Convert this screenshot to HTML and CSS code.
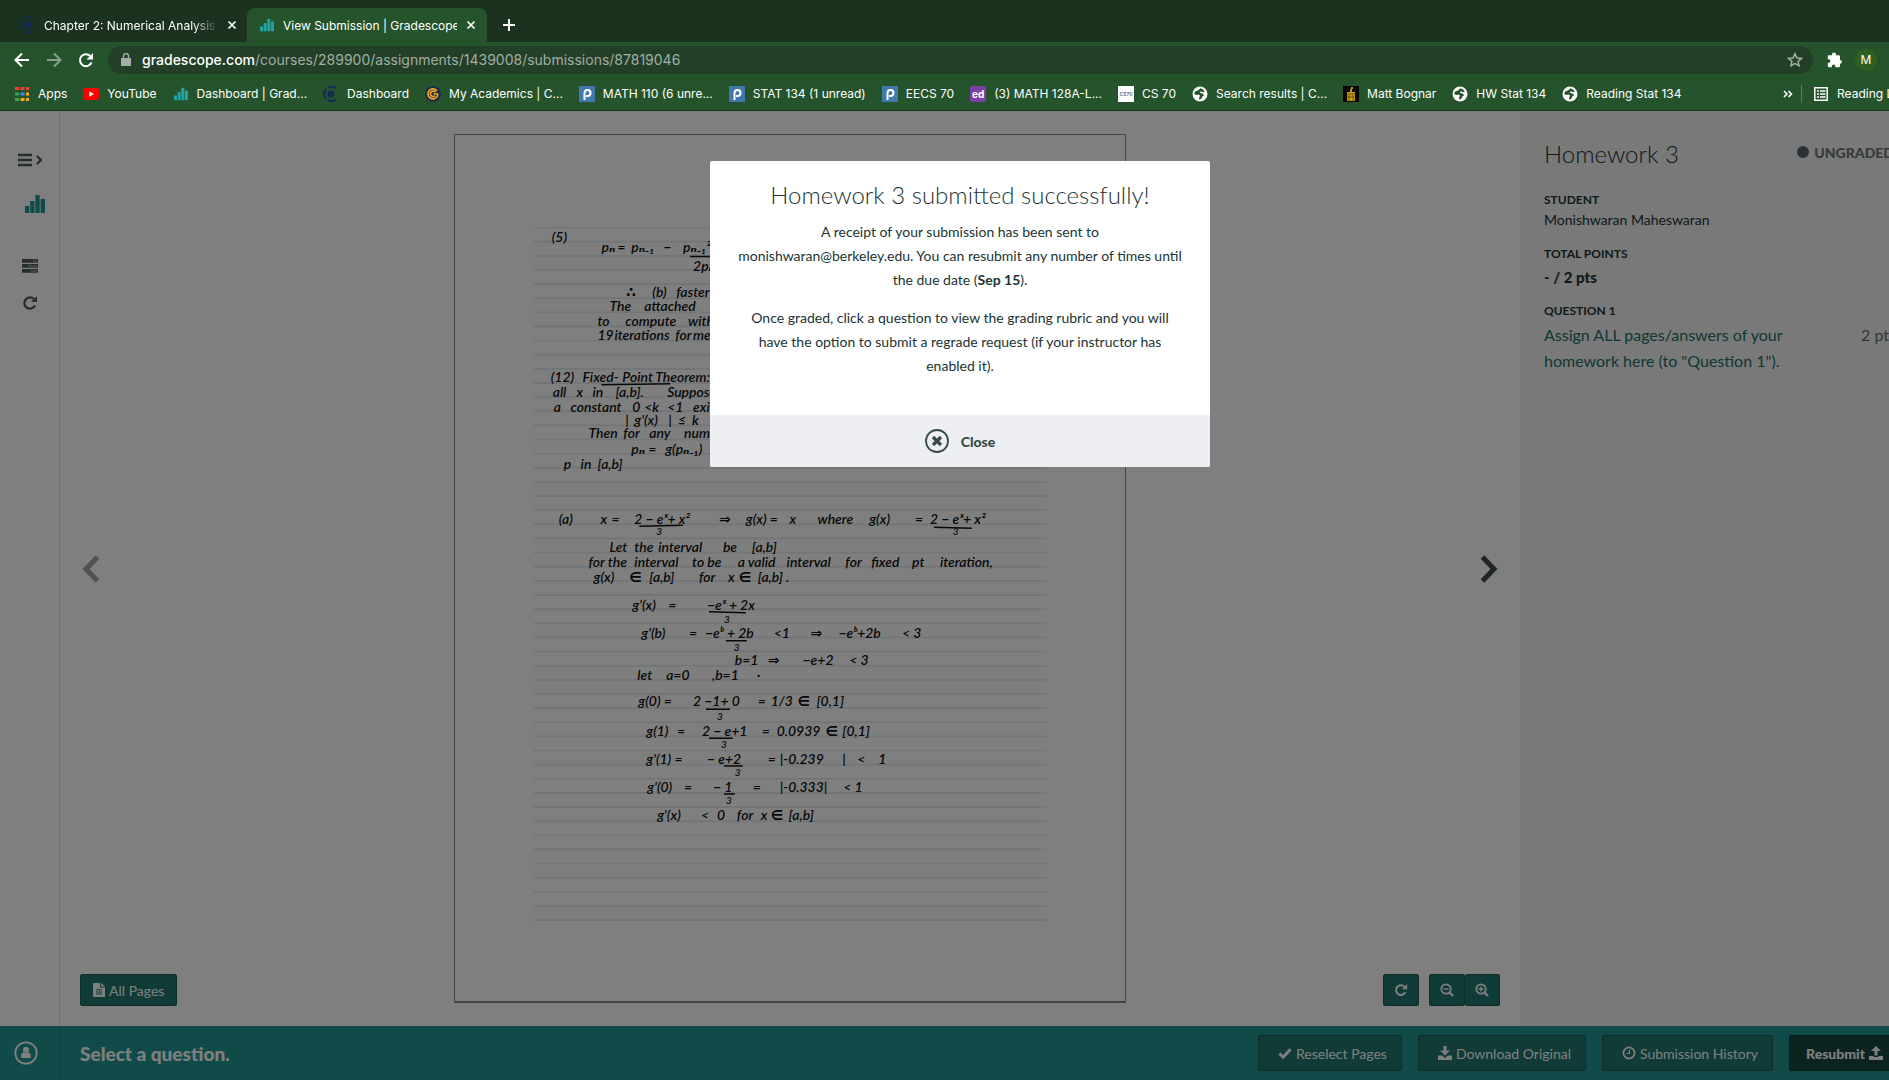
FILE: index.html
```html
<!DOCTYPE html>
<html lang="en">
<head>
<meta charset="utf-8">
<title>View Submission | Gradescope</title>
<link rel="stylesheet" href="styles.css">
</head>
<body>
<svg class="defs" aria-hidden="true">
  <symbol id="bars" viewBox="0 0 20 18"><path d="M0 11h4.3v7H0zM5.2 6h4.3v12H5.2zM10.4 0h4.3v18h-4.3zM15.6 4H20v14h-4.4z"/></symbol>
  <symbol id="cal" viewBox="0 0 16 16"><circle cx="8" cy="8" r="3.4"/><path d="M12.5 2.2A7 7 0 0 0 5 1.800M3.300 3A7 7 0 0 0 3.300 13M5 14.200a7 7 0 0 0 7.500-.4" fill="none" stroke="currentColor" stroke-width="2"/></symbol>
  <symbol id="close" viewBox="0 0 10 10"><path d="M1.500 1.500l7 7M8.500 1.500l-7 7" fill="none" stroke="currentColor" stroke-width="1.700"/></symbol>
  <symbol id="globe" viewBox="0 0 16 16"><circle cx="8" cy="8" r="7.500"/><path d="M8.500 2.200 6 4.500 3 5.500 2.200 8l2.300 1 2-.5 1.500 1L7 12l.5 1.800 2-1.300.8-2 1.700-1-1-1.800L8.500 7l-1-.8 2-1 1.500 1 1.800-.2A6 6 0 0 0 8.500 2.200z" fill="#25532b"/></symbol>
  <symbol id="piazza" viewBox="0 0 16 16"><path fill="#4179ad" d="M0 0h16v16H0z"/><path d="M5.500 14V6.800a3 3 0 1 1 3 3.200H7" fill="none" stroke="#fff" stroke-width="2"/></symbol>
  <symbol id="redo" viewBox="0 0 16 16"><path d="M13 10.500A5.600 5.600 0 1 1 12 4.200" fill="none" stroke="currentColor" stroke-width="2.300"/><path d="M15 1v6H9z"/></symbol>
</svg>
<div class="window">
  <header class="chrome">
    <div class="tabs">
      <div class="tab"><svg class="i16 navy"><use href="#cal"/></svg><span class="fade">Chapter 2: Numerical Analysis</span><button class="x" aria-label="Close tab"><svg><use href="#close"/></svg></button></div>
      <div class="tab active"><svg class="i14 teal"><use href="#bars"/></svg><span>View Submission | Gradescope</span><button class="x" aria-label="Close tab"><svg><use href="#close"/></svg></button></div>
      <button class="new" aria-label="New tab"><svg viewBox="0 0 12 12"><path d="M6 0v12M0 6h12" stroke="currentColor" stroke-width="2"/></svg></button>
    </div>
    <div class="toolbar">
      <button aria-label="Back"><svg viewBox="0 0 16 16"><path d="M15 8H2M8 1.500 1.500 8 8 14.500" fill="none" stroke="currentColor" stroke-width="2"/></svg></button>
      <button class="dim" aria-label="Forward"><svg viewBox="0 0 16 16"><path d="M1 8h13M8 1.500 14.500 8 8 14.500" fill="none" stroke="currentColor" stroke-width="2"/></svg></button>
      <button aria-label="Reload"><svg viewBox="0 0 16 16"><path d="M13.500 10.500A6 6 0 1 1 12.300 4" fill="none" stroke="currentColor" stroke-width="2"/><path d="M15 1v6.500H8.500z"/></svg></button>
      <div class="omnibox">
        <svg class="lock" viewBox="0 0 10 13"><path d="M0 5h10v8H0z"/><path d="M2.500 5V3a2.500 2.500 0 0 1 5 0v2" fill="none" stroke="currentColor" stroke-width="1.400"/></svg>
        <a class="url" href="#"><b>gradescope.com</b>/courses/289900/assignments/1439008/submissions/87819046</a>
        <svg class="i16 star" viewBox="0 0 16 16"><path d="m8 1.800 1.900 4.200 4.600.4-3.500 3 1.100 4.500L8 11.500l-4.100 2.400L5 9.400l-3.500-3 4.600-.4z" fill="none" stroke="currentColor" stroke-width="1.400"/></svg>
      </div>
      <svg class="i16" viewBox="0 0 16 16"><path d="M13.500 8H13V4.500a1.300 1.300 0 0 0-1.300-1.300H9V2.600a2 2 0 0 0-4 0v.6H2A1.300 1.300 0 0 0 .8 4.500v2.800h.8a1.700 1.700 0 0 1 0 3.600H.8V14A1.300 1.300 0 0 0 2 15.200h2.800v-.8a1.700 1.700 0 0 1 3.600 0v.8h3.300A1.300 1.300 0 0 0 13 14v-2.300h.5a1.900 1.900 0 0 0 0-3.700z"/></svg>
      <span class="avatar">M</span>
    </div>
    <nav class="bookmarks">
      <a href="#"><svg class="i16" viewBox="0 0 16 16"><path fill="#ea4335" d="M1 1h4v3H1zM6.500 1h4v3h-4zM12 1h3v3h-3z"/><path fill="#34a853" d="M1 6.500h4v3H1zM1 12h4v3H1z"/><path fill="#4285f4" d="M6.500 6.500h4v3h-4z"/><path fill="#fbab17" d="M12 6.500h3v3h-3zM6.500 12h4v3h-4zM12 12h3v3h-3z"/></svg>Apps</a>
      <a href="#"><svg class="i16" viewBox="0 0 16 16"><rect y="2" width="16" height="12" rx="3" fill="#f00"/><path d="M6.300 5.300 11 8l-4.700 2.700z"/></svg>YouTube</a>
      <a href="#"><svg class="i16 teal thin"><use href="#bars"/></svg>Dashboard | Grad...</a>
      <a href="#"><svg class="i16 navy"><use href="#cal"/></svg>Dashboard</a>
      <a href="#"><svg class="i16" viewBox="0 0 16 16"><circle cx="8" cy="8" r="8" fill="#1c2c4c"/><path d="M12 5a5 5 0 1 0 .5 5V8H8.500M10.500 6.200A2.800 2.800 0 1 0 10 10" fill="none" stroke="#f0a32b" stroke-width="1.700"/></svg>My Academics | C...</a>
      <a href="#"><svg class="i16"><use href="#piazza"/></svg>MATH 110 (6 unre...</a>
      <a href="#"><svg class="i16"><use href="#piazza"/></svg>STAT 134 (1 unread)</a>
      <a href="#"><svg class="i16"><use href="#piazza"/></svg>EECS 70</a>
      <a href="#"><span class="ed">ed</span>(3) MATH 128A-L...</a>
      <a href="#"><span class="cs">CS70</span>CS 70</a>
      <a href="#"><svg class="i16"><use href="#globe"/></svg>Search results | C...</a>
      <a href="#"><svg class="i16" viewBox="0 0 16 16"><path fill="#050505" d="M0 0h16v16H0z"/><path fill="#c99a13" d="M4 6h8v9H4zM7 3h2v3H7zM8 1h2v2H8z"/><path stroke="#443000" stroke-width=".6" d="M4 8h8M4 11h8M6 9v6M10 9v6"/></svg>Matt Bognar</a>
      <a href="#"><svg class="i16"><use href="#globe"/></svg>HW Stat 134</a>
      <a href="#"><svg class="i16"><use href="#globe"/></svg>Reading Stat 134</a>
      <button class="more" aria-label="More bookmarks"><svg viewBox="0 0 10 8"><path d="m1 1 3 3-3 3M5.500 1l3 3-3 3" fill="none" stroke="currentColor" stroke-width="1.600"/></svg></button>
      <a class="reading" href="#"><svg class="i16" viewBox="0 0 16 16"><path d="M1.800 1.800h12.400v12.400H1.800zM4 5h2M7 5h5.500M4 8h2M7 8h5.500M4 11h2M7 11h5.500" fill="none" stroke="currentColor" stroke-width="1.500"/></svg>Reading List</a>
    </nav>
  </header>
  <div class="app">
    <div class="content">
      <nav class="side">
        <button class="wide" aria-label="Open menu"><svg viewBox="0 0 25 14"><path d="M0 2h14M0 7h14M0 12h14M19 3l4 4-4 4" fill="none" stroke="currentColor" stroke-width="2.300"/></svg></button>
        <a class="logo" href="#" aria-label="Gradescope"><svg><use href="#bars"/></svg></a>
        <a class="tasks" href="#" aria-label="Assignments"><svg viewBox="0 0 16 14"><path d="M0 0h16v3.800H0zM0 5h16v3.800H0zM0 10h16v3.800H0z"/><path d="M11 2h4M6 7h9M9 12h6" stroke="#bbb" stroke-width="1.200"/></svg></a>
        <a href="#" aria-label="Regrade requests"><svg><use href="#redo"/></svg></a>
      </nav>
      <main class="viewer">
        <button class="arrow prev" aria-label="Previous page"><svg viewBox="0 0 18 28"><path d="M15.500 2 4 14l11.500 12" fill="none" stroke="currentColor" stroke-width="5"/></svg></button>
        <svg class="paper" viewBox="454 134 672 870" role="img" aria-label="Page of handwritten homework">
          <defs><pattern id="rule" x="533" y="226" width="515" height="14.200" patternUnits="userSpaceOnUse"><path d="M0 1h515" stroke="#dfe3e6" stroke-width="1.400"/></pattern></defs>
          <rect x="533" y="226" width="515" height="699" fill="url(#rule)"/>
          <g class="ink">
            <text y="241"><tspan x="551">(5)</tspan></text>
            <text y="252"><tspan x="601">pₙ</tspan><tspan x="617">=</tspan><tspan x="631">pₙ₋₁</tspan><tspan x="663">−</tspan><tspan x="683">pₙ₋₁²</tspan></text>
            <text y="271"><tspan x="693">2pₙ</tspan></text>
            <text y="297"><tspan x="626">∴</tspan><tspan x="652">(b)</tspan><tspan x="676">faster</tspan></text>
            <text y="311"><tspan x="609">The</tspan><tspan x="644">attached</tspan></text>
            <text y="326"><tspan x="597">to</tspan><tspan x="625">compute</tspan><tspan x="688">with</tspan></text>
            <text y="340"><tspan x="597">19</tspan><tspan x="614">iterations</tspan><tspan x="675">for</tspan><tspan x="693">me</tspan></text>
            <text y="382"><tspan x="550">(12)</tspan><tspan x="582">Fixed-</tspan><tspan x="622">Point</tspan><tspan x="655">Theorem:</tspan></text>
            <text y="397"><tspan x="552">all</tspan><tspan x="576">x</tspan><tspan x="592">in</tspan><tspan x="615">[a,b].</tspan><tspan x="667">Suppose,</tspan></text>
            <text y="412"><tspan x="553">a</tspan><tspan x="570">constant</tspan><tspan x="632">0</tspan><tspan x="644">&lt;k</tspan><tspan x="667">&lt;1</tspan><tspan x="693">exi</tspan></text>
            <text y="425"><tspan x="625">|</tspan><tspan x="634">g'(x)</tspan><tspan x="668">|</tspan><tspan x="678">≤</tspan><tspan x="692">k</tspan></text>
            <text y="438"><tspan x="588">Then</tspan><tspan x="623">for</tspan><tspan x="649">any</tspan><tspan x="684">num</tspan></text>
            <text y="454"><tspan x="631">pₙ</tspan><tspan x="648">=</tspan><tspan x="665">g(pₙ₋₁)</tspan></text>
            <text y="470"><tspan x="563">p</tspan><tspan x="580">in</tspan><tspan x="597">[a,b]</tspan></text>
            <text y="525"><tspan x="558">(a)</tspan><tspan x="600">x</tspan><tspan x="611">=</tspan><tspan x="634">2 − eˣ+ x²</tspan><tspan x="719">⇒</tspan><tspan x="746">g(x) =</tspan><tspan x="790">x</tspan><tspan x="818">where</tspan><tspan x="870">g(x)</tspan><tspan x="916">=</tspan><tspan x="931">2 − eˣ+ x²</tspan></text>
            <text class="den" y="536"><tspan x="656">3</tspan><tspan x="954">3</tspan></text>
            <text y="553"><tspan x="609">Let</tspan><tspan x="634">the</tspan><tspan x="658">interval</tspan><tspan x="723">be</tspan><tspan x="752">[a,b]</tspan></text>
            <text y="568"><tspan x="588">for the</tspan><tspan x="634">interval</tspan><tspan x="692">to be</tspan><tspan x="738">a valid</tspan><tspan x="787">interval</tspan><tspan x="846">for</tspan><tspan x="872">fixed</tspan><tspan x="913">pt</tspan><tspan x="941">iteration,</tspan></text>
            <text y="583"><tspan x="593">g(x)</tspan><tspan x="629">∈</tspan><tspan x="649">[a,b]</tspan><tspan x="699">for</tspan><tspan x="728">x</tspan><tspan x="739">∈</tspan><tspan x="758">[a,b] .</tspan></text>
            <text y="611"><tspan x="632">g'(x)</tspan><tspan x="668">=</tspan><tspan x="707">−eˣ + 2x</tspan></text>
            <text class="den" y="624"><tspan x="724">3</tspan></text>
            <text y="639"><tspan x="641">g'(b)</tspan><tspan x="689">=</tspan><tspan x="705">−eᵇ + 2b</tspan><tspan x="774">&lt;1</tspan><tspan x="811">⇒</tspan><tspan x="839">−eᵇ+2b</tspan><tspan x="903">&lt; 3</tspan></text>
            <text class="den" y="652"><tspan x="734">3</tspan></text>
            <text y="666"><tspan x="735">b=1</tspan><tspan x="768">⇒</tspan><tspan x="803">−e+2</tspan><tspan x="850">&lt; 3</tspan></text>
            <text y="682"><tspan x="637">let</tspan><tspan x="666">a=0</tspan><tspan x="712">,b=1</tspan><tspan x="757">·</tspan></text>
            <text y="708"><tspan x="638">g(0) =</tspan><tspan x="693">2 −1+ 0</tspan><tspan x="758">=</tspan><tspan x="771">1/3</tspan><tspan x="798">∈</tspan><tspan x="817">[0,1]</tspan></text>
            <text class="den" y="722"><tspan x="717">3</tspan></text>
            <text y="738"><tspan x="646">g(1)</tspan><tspan x="677">=</tspan><tspan x="702">2 − e+1</tspan><tspan x="762">=</tspan><tspan x="777">0.0939</tspan><tspan x="826">∈</tspan><tspan x="843">[0,1]</tspan></text>
            <text class="den" y="750"><tspan x="721">3</tspan></text>
            <text y="766"><tspan x="646">g'(1) =</tspan><tspan x="707">− e+2</tspan><tspan x="768">=</tspan><tspan x="780">|-0.239</tspan><tspan x="843">|</tspan><tspan x="858">&lt;</tspan><tspan x="879">1</tspan></text>
            <text class="den" y="778"><tspan x="735">3</tspan></text>
            <text y="794"><tspan x="647">g'(0)</tspan><tspan x="684">=</tspan><tspan x="713">− 1</tspan><tspan x="753">=</tspan><tspan x="780">|-0.333|</tspan><tspan x="844">&lt; 1</tspan></text>
            <text class="den" y="806"><tspan x="726">3</tspan></text>
            <text y="822"><tspan x="657">g'(x)</tspan><tspan x="701">&lt;</tspan><tspan x="717">0</tspan><tspan x="737">for</tspan><tspan x="761">x</tspan><tspan x="771">∈</tspan><tspan x="789">[a,b]</tspan></text>
            <path d="M690 256h22M601 385l69-1M639 527l44-1M935 528l38 1M709 613l37 1M726 642h21M706 711h24M709 740h24M724 768h19M724 796h11"/>
          </g>
        </svg>
        <button class="arrow next" aria-label="Next page"><svg viewBox="0 0 18 28"><path d="M2.500 2 14 14 2.500 26" fill="none" stroke="currentColor" stroke-width="5"/></svg></button>
        <div class="controls">
          <button class="btn"><svg class="file" viewBox="0 0 12 14"><path fill-rule="evenodd" d="M0 0h7v4.500h5V14H0zM8 0l4 3.500H8zM3 6.200h6v1H3zM3 8.400h6v1H3zM3 10.600h6v1H3z"/></svg>All Pages</button>
          <button class="btn sq right" aria-label="Rotate"><svg class="i14"><use href="#redo"/></svg></button>
          <div class="group">
            <button class="btn sq" aria-label="Zoom out"><svg class="i14" viewBox="0 0 14 14"><path d="M9.500 9.500 13 13" stroke="currentColor" stroke-width="2.400"/><path d="M3.500 6h5" stroke="currentColor" stroke-width="1.400"/><circle cx="6" cy="6" r="4.700" fill="none" stroke="currentColor" stroke-width="1.800"/></svg></button>
            <button class="btn sq" aria-label="Zoom in"><svg class="i14" viewBox="0 0 14 14"><path d="M9.500 9.500 13 13" stroke="currentColor" stroke-width="2.400"/><path d="M3.500 6h5M6 3.500v5" stroke="currentColor" stroke-width="1.400"/><circle cx="6" cy="6" r="4.700" fill="none" stroke="currentColor" stroke-width="1.800"/></svg></button>
          </div>
        </div>
      </main>
      <aside class="panel">
        <div class="head"><h1>Homework 3</h1><span class="status"><i></i>UNGRADED</span></div>
        <h2>STUDENT</h2>
        <p class="name">Monishwaran Maheswaran</p>
        <h2>TOTAL POINTS</h2>
        <p class="points">- / 2 pts</p>
        <h2>QUESTION 1</h2>
        <div class="question"><a href="#">Assign ALL pages/answers of your homework here (to "Question 1").</a><span>2 pts</span></div>
      </aside>
    </div>
    <footer class="actions">
      <a class="user" href="#" aria-label="Account"><svg viewBox="0 0 24 24"><circle cx="12" cy="12" r="10.700" fill="none" stroke="currentColor" stroke-width="1.800"/><circle cx="12" cy="8.800" r="3"/><path d="M7.200 17v-2.500c0-2 1.200-3.300 2.500-3.300 1.200 1 3.400 1 4.600 0 1.300 0 2.500 1.300 2.500 3.300V17z"/></svg></a>
      <strong>Select a question.</strong>
      <div class="buttons">
        <button class="btn big"><svg class="i14" viewBox="0 0 14 14"><path d="m1.500 7.500 3.700 3.700 7.300-8" fill="none" stroke="currentColor" stroke-width="3"/></svg>Reselect Pages</button>
        <button class="btn big"><svg class="i14" viewBox="0 0 14 14"><path d="M5.500 0h3v4.500H12l-5 5-5-5h3.500zM0 9.500h4L7 12l3-2.500h4V14H0z"/></svg>Download Original</button>
        <button class="btn big"><svg class="i14" viewBox="0 0 14 14"><circle cx="7" cy="7" r="5.600" fill="none" stroke="currentColor" stroke-width="1.700"/><path d="M7.500 3.500v4H4.800" fill="none" stroke="currentColor" stroke-width="1.200"/></svg>Submission History</button>
        <button class="btn big dark">Resubmit<svg class="i14" viewBox="0 0 14 14"><path d="m7 0 5 5H8.500v4.500h-3V5H2zM0 10h4.500v1h5v-1H14v4H0z"/></svg></button>
      </div>
    </footer>
    <div class="overlay">
      <section class="modal" role="dialog" aria-labelledby="done">
        <div class="body">
          <h2 id="done">Homework 3 submitted successfully!</h2>
          <p>A receipt of your submission has been sent to<br>monishwaran@berkeley.edu. You can resubmit any number of times until<br>the due date (<b>Sep 15</b>).</p>
          <p>Once graded, click a question to view the grading rubric and you will<br>have the option to submit a regrade request (if your instructor has<br>enabled it).</p>
        </div>
        <button class="dismiss"><svg viewBox="0 0 24 24"><circle cx="12" cy="12" r="11" fill="none" stroke="currentColor" stroke-width="1.800"/><path d="m8 8 8 8M16 8l-8 8" stroke="currentColor" stroke-width="3.200"/></svg>Close</button>
      </section>
    </div>
  </div>
</div>
</body>
</html>
```
FILE: styles.css
```css
* { box-sizing: border-box; }
html, body { height: 100%; margin: 0; overflow: hidden; }
body { font-family: Lato, sans-serif; font-size: 14px; color: #203432; }
button { font: inherit; color: inherit; background: none; border: 0; padding: 0; display: flex; align-items: center; justify-content: center; }
a { color: inherit; text-decoration: none; }
svg { fill: currentColor; flex: none; display: block; }
h1, h2, p { margin: 0; }
.defs { width: 0; height: 0; position: absolute; }
.i16 { width: 16px; height: 16px; }
.i14 { width: 14px; height: 14px; }
.teal { color: #20a3a0; }
.navy { color: #152a57; }

/* The window runs past the right edge of the view. */
.window { width: calc(100% + 31px); height: 100%; display: flex; flex-direction: column; }

.chrome { background: #25532b; color: #fff; font-family: Inter, sans-serif; font-size: 12px; font-weight: 400; border-bottom: 1px solid #1a351d; }
.tabs { display: flex; height: 42px; padding-top: 8px; background: #1a321e; }
.tab { width: 240px; padding: 0 11px 0 13px; display: flex; align-items: center; gap: 9px; white-space: nowrap; }
.tab:first-child { width: 247px; padding: 0 10px 0 20px; gap: 8px; }
.tab span { flex: 1; overflow: hidden; }
.tab.active { background: #25532b; border-radius: 8px 8px 0 0; }
.fade { mask-image: linear-gradient(90deg, #000 85%, transparent); }
.x svg { width: 10px; height: 10px; }
.new { width: 44px; }
.new svg { width: 12px; height: 12px; }
.toolbar { display: flex; align-items: center; height: 35px; padding: 0 43px 0 14px; gap: 16px; }
.toolbar button svg { width: 16px; height: 16px; }
.dim { opacity: .45; }
.omnibox { flex: 1; min-width: 0; height: 28px; margin: 0 -2px; border-radius: 14px; background: #243f28; display: flex; align-items: center; padding: 0 10px 0 13px; gap: 11px; }
.lock { width: 10px; height: 13px; color: #a3afa5; }
.url { flex: 1; font-size: 14px; color: #a0aea2; }
.url b { font-weight: 500; color: #fff; }
.star { color: #a9b5ab; }
.avatar { width: 22px; height: 22px; margin-left: -4px; border-radius: 50%; background: #2e6021; display: grid; place-items: center; font-size: 12px; }
.bookmarks { display: flex; align-items: center; height: 33px; padding-left: 14px; gap: 16px; white-space: nowrap; }
.bookmarks a { display: flex; align-items: center; gap: 8px; }
.thin { padding: 1px; }
.ed, .cs { width: 16px; height: 16px; display: grid; place-items: center; font-size: 10px; font-weight: 700; background: #7b3fa5; border-radius: 2px; }
.cs { background: #fff; color: #777; font-size: 5px; border-radius: 0; }
.more { margin-left: auto; margin-right: -8px; }
.more svg { width: 10px; height: 8px; }
.bookmarks .reading { border-left: 1px solid #5a7d5f; padding-left: 11px; width: 119px; height: 18px; }

.app { flex: 1; min-height: 0; display: flex; flex-direction: column; position: relative; background: #fff; }
.content { flex: 1; min-height: 0; display: flex; }
.side { width: 60px; border-right: 1px solid #ddd; padding: 42px 0 0 1px; display: flex; flex-direction: column; align-items: center; color: #4d5a5b; }
.side svg { width: 16px; height: 16px; }
.side .wide svg { width: 25px; height: 14px; }
.side .logo { color: #229692; margin: 28px 0 45px 9px; }
.side .logo svg { width: 20px; height: 18px; }
.side .tasks { margin-bottom: 21px; }
.viewer { flex: 1; min-width: 0; position: relative; display: flex; justify-content: space-between; align-items: center; padding: 23px 22px; color: #3e4b4c; }
.paper { height: 100%; width: auto; aspect-ratio: 672 / 870; border: 1px solid #7f8f8e; border-bottom-width: 2px; }
.arrow svg { width: 18px; height: 28px; }
.prev { opacity: .5; }
.ink { fill: #111; font: italic 600 14px Lato, "DejaVu Sans", sans-serif; }
.ink path { fill: none; stroke: #111; stroke-width: 1.5; }
.ink .den { font-size: 10px; }
.controls { position: absolute; left: 20px; right: 20px; bottom: 20px; display: flex; gap: 10px; }
.btn { height: 32px; padding: 0 12px; gap: 4px; background: #20766f; border: 1px solid #185c57; border-radius: 2px; color: #fff; white-space: nowrap; }
.sq { width: 36px; padding: 0; }
.right { margin-left: auto; }
.group { display: flex; }
.group .btn + .btn { border-left: 0; width: 35px; }
.file { width: 12px; height: 14px; }
.panel { width: 400px; background: #f2f2f2; padding: 27px 24px; }
.head { display: flex; justify-content: space-between; margin-bottom: 23px; }
h1, .modal h2 { font-size: 24px; font-weight: 300; line-height: 32px; }
.status { display: flex; align-items: center; gap: 5px; height: 28px; font-weight: 900; color: #6b7678; margin-right: 2px; }
.status i { width: 12px; height: 12px; border-radius: 50%; background: #56636a; }
.panel h2 { font-size: 12px; line-height: 14px; font-weight: 700; }
.name { line-height: 20px; margin: 3px 0 17px; }
.points { font-size: 15px; font-weight: 900; line-height: 26px; margin: 3px 0 14px; }
.question { display: flex; justify-content: space-between; font-size: 16px; line-height: 26px; margin-top: 4px; color: #66706f; }
.question a { width: 250px; color: #1f7069; }
.actions { height: 54px; display: flex; align-items: center; background: #229692; color: #fff; }
.user { width: 60px; padding-left: 14px; height: 54px; display: flex; align-items: center; border-right: 1px solid #208985; }
.user svg { width: 24px; height: 24px; }
.actions strong { margin-left: 20px; font-size: 19px; font-weight: 900; }
.buttons { margin-left: auto; margin-right: 24px; display: flex; gap: 16px; }
.big { height: 36px; padding: 0 14px 0 19px; }
.dark { background: #16483f; border-color: #123c35; font-weight: 900; padding: 0 12px 0 16px; }
.overlay { position: absolute; inset: 0; background: rgba(0, 0, 0, .5); display: flex; justify-content: center; align-items: flex-start; padding-top: 50px; }
.modal { width: 500px; background: #fff; border-radius: 2px; overflow: hidden; text-align: center; }
.body { padding: 18px 24px 37px; }
.modal p { line-height: 24px; margin-top: 14px; white-space: nowrap; }
.modal h2 + p { margin-top: 9px; }
.dismiss { width: 100%; height: 52px; background: #eeeff3; color: #374a4a; font-weight: 900; gap: 12px; }
.dismiss svg { width: 24px; height: 24px; }
```
